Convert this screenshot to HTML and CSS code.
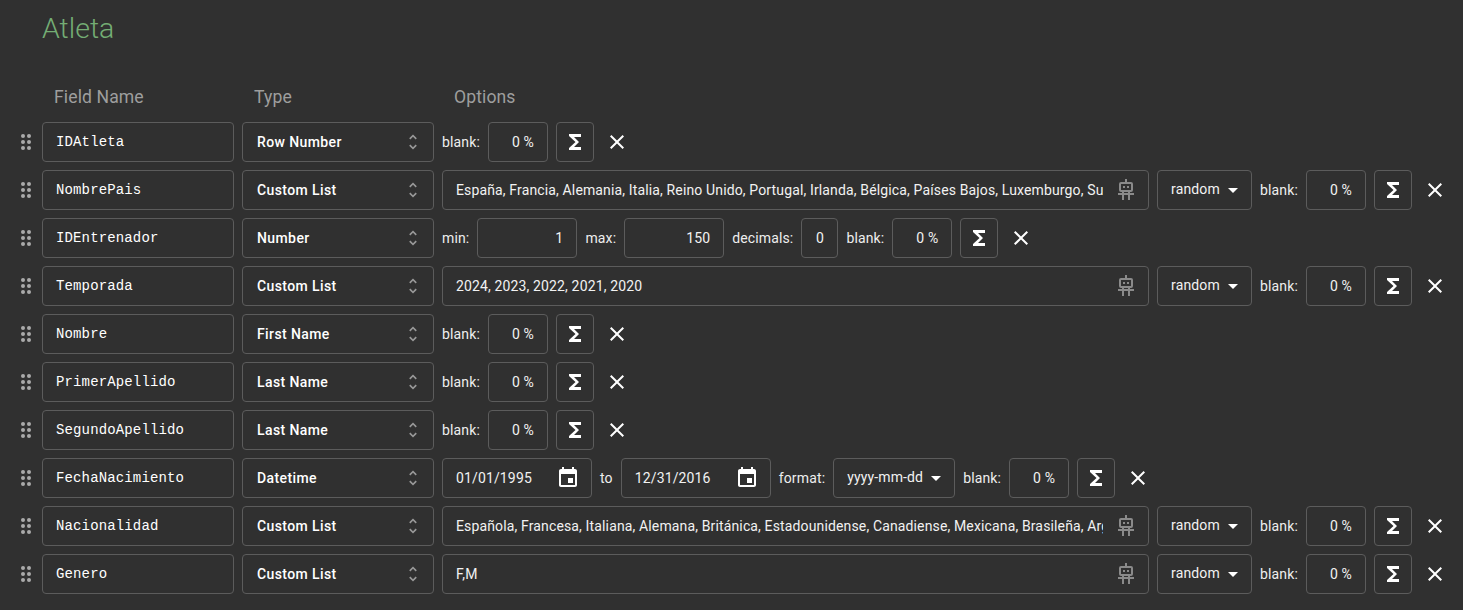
FILE: index.html
```html
<!DOCTYPE html>
<html lang="es">
<head>
<meta charset="utf-8">
<title>Atleta</title>
<link rel="stylesheet" href="styles.css">
</head>
<body>
<svg class="defs" width="0" height="0" aria-hidden="true">
  <symbol id="i-grip" viewBox="0 0 12 16"><circle cx="3" cy="2" r="2"/><circle cx="9" cy="2" r="2"/><circle cx="3" cy="8" r="2"/><circle cx="9" cy="8" r="2"/><circle cx="3" cy="14" r="2"/><circle cx="9" cy="14" r="2"/></symbol>
  <symbol id="i-unfold" viewBox="0 0 24 24"><path d="M12 5.83L15.17 9l1.41-1.41L12 3 7.41 7.59 8.83 9 12 5.83zm0 12.34L8.83 15l-1.42 1.41L12 21l4.59-4.59L15.17 15 12 18.17z"/></symbol>
  <symbol id="i-sigma" viewBox="0 0 24 24"><path d="M18 4H6v2l6.5 6L6 18v2h12v-3h-7l5-5-5-5h7z"/></symbol>
  <symbol id="i-close" viewBox="0 0 24 24"><path d="M19 6.41L17.59 5 12 10.59 6.41 5 5 6.41 10.59 12 5 17.59 6.41 19 12 13.41 17.59 19 19 17.59 13.41 12z"/></symbol>
  <symbol id="i-drop" viewBox="0 0 24 24"><path d="M7 10l5 5 5-5z"/></symbol>
  <symbol id="i-event" viewBox="0 0 24 24"><path d="M17 12h-5v5h5v-5zM16 1v2H8V1H6v2H5c-1.11 0-1.99.9-1.99 2L3 19c0 1.1.89 2 2 2h14c1.1 0 2-.9 2-2V5c0-1.1-.9-2-2-2h-1V1h-2zm3 18H5V8h14v11z"/></symbol>
  <symbol id="i-robot" viewBox="0 0 24 24"><path fill-rule="evenodd" d="M11 1h2v3h4a2 2 0 0 1 2 2v6a2 2 0 0 1-2 2h-1v1h4v2h-4v5h-2v-5h-4v5H8v-5H4v-2h4v-1H7a2 2 0 0 1-2-2V6a2 2 0 0 1 2-2h4zM7 6v6h10V6zM9 8h2v2H9zM13 8h2v2h-2zM10 14v1h4v-1z"/></symbol>
</svg>

<main class="page">
  <h1 class="title">Atleta</h1>
  <div class="head">
    <div class="head-cell">Field Name</div>
    <div class="head-cell">Type</div>
    <div class="head-cell">Options</div>
  </div>

  <div class="row">
    <svg class="grip"><use href="#i-grip"/></svg>
    <div class="box name">IDAtleta</div>
    <div class="box type">Row Number<svg class="unfold"><use href="#i-unfold"/></svg></div>
    <span class="lbl">blank:</span><div class="box num pct">0 %</div>
    <button class="box sum"><svg class="ic"><use href="#i-sigma"/></svg></button>
    <button class="close"><svg class="ic"><use href="#i-close"/></svg></button>
  </div>

  <div class="row">
    <svg class="grip"><use href="#i-grip"/></svg>
    <div class="box name">NombrePais</div>
    <div class="box type">Custom List<svg class="unfold"><use href="#i-unfold"/></svg></div>
    <div class="box list"><span class="list-text">España, Francia, Alemania, Italia, Reino Unido, Portugal, Irlanda, Bélgica, Países Bajos, Luxemburgo, Su</span><svg class="robot"><use href="#i-robot"/></svg></div>
    <div class="box sel order"><span class="sel-text">random</span><svg class="ic drop"><use href="#i-drop"/></svg></div>
    <span class="lbl">blank:</span><div class="box num pct">0 %</div>
    <button class="box sum"><svg class="ic"><use href="#i-sigma"/></svg></button>
    <button class="close"><svg class="ic"><use href="#i-close"/></svg></button>
  </div>

  <div class="row">
    <svg class="grip"><use href="#i-grip"/></svg>
    <div class="box name">IDEntrenador</div>
    <div class="box type">Number<svg class="unfold"><use href="#i-unfold"/></svg></div>
    <span class="lbl">min:</span><div class="box num wide">1</div>
    <span class="lbl">max:</span><div class="box num wide">150</div>
    <span class="lbl">decimals:</span><div class="box dec">0</div>
    <span class="lbl">blank:</span><div class="box num pct">0 %</div>
    <button class="box sum"><svg class="ic"><use href="#i-sigma"/></svg></button>
    <button class="close"><svg class="ic"><use href="#i-close"/></svg></button>
  </div>

  <div class="row">
    <svg class="grip"><use href="#i-grip"/></svg>
    <div class="box name">Temporada</div>
    <div class="box type">Custom List<svg class="unfold"><use href="#i-unfold"/></svg></div>
    <div class="box list"><span class="list-text">2024, 2023, 2022, 2021, 2020</span><svg class="robot"><use href="#i-robot"/></svg></div>
    <div class="box sel order"><span class="sel-text">random</span><svg class="ic drop"><use href="#i-drop"/></svg></div>
    <span class="lbl">blank:</span><div class="box num pct">0 %</div>
    <button class="box sum"><svg class="ic"><use href="#i-sigma"/></svg></button>
    <button class="close"><svg class="ic"><use href="#i-close"/></svg></button>
  </div>

  <div class="row">
    <svg class="grip"><use href="#i-grip"/></svg>
    <div class="box name">Nombre</div>
    <div class="box type">First Name<svg class="unfold"><use href="#i-unfold"/></svg></div>
    <span class="lbl">blank:</span><div class="box num pct">0 %</div>
    <button class="box sum"><svg class="ic"><use href="#i-sigma"/></svg></button>
    <button class="close"><svg class="ic"><use href="#i-close"/></svg></button>
  </div>

  <div class="row">
    <svg class="grip"><use href="#i-grip"/></svg>
    <div class="box name">PrimerApellido</div>
    <div class="box type">Last Name<svg class="unfold"><use href="#i-unfold"/></svg></div>
    <span class="lbl">blank:</span><div class="box num pct">0 %</div>
    <button class="box sum"><svg class="ic"><use href="#i-sigma"/></svg></button>
    <button class="close"><svg class="ic"><use href="#i-close"/></svg></button>
  </div>

  <div class="row">
    <svg class="grip"><use href="#i-grip"/></svg>
    <div class="box name">SegundoApellido</div>
    <div class="box type">Last Name<svg class="unfold"><use href="#i-unfold"/></svg></div>
    <span class="lbl">blank:</span><div class="box num pct">0 %</div>
    <button class="box sum"><svg class="ic"><use href="#i-sigma"/></svg></button>
    <button class="close"><svg class="ic"><use href="#i-close"/></svg></button>
  </div>

  <div class="row">
    <svg class="grip"><use href="#i-grip"/></svg>
    <div class="box name">FechaNacimiento</div>
    <div class="box type">Datetime<svg class="unfold"><use href="#i-unfold"/></svg></div>
    <div class="box date">01/01/1995<svg class="ic"><use href="#i-event"/></svg></div>
    <span class="lbl">to</span>
    <div class="box date">12/31/2016<svg class="ic"><use href="#i-event"/></svg></div>
    <span class="lbl">format:</span>
    <div class="box sel fmt"><span class="sel-text">yyyy-mm-dd</span><svg class="ic drop"><use href="#i-drop"/></svg></div>
    <span class="lbl">blank:</span><div class="box num pct">0 %</div>
    <button class="box sum"><svg class="ic"><use href="#i-sigma"/></svg></button>
    <button class="close"><svg class="ic"><use href="#i-close"/></svg></button>
  </div>

  <div class="row">
    <svg class="grip"><use href="#i-grip"/></svg>
    <div class="box name">Nacionalidad</div>
    <div class="box type">Custom List<svg class="unfold"><use href="#i-unfold"/></svg></div>
    <div class="box list"><span class="list-text">Española, Francesa, Italiana, Alemana, Británica, Estadounidense, Canadiense, Mexicana, Brasileña, Arg</span><svg class="robot"><use href="#i-robot"/></svg></div>
    <div class="box sel order"><span class="sel-text">random</span><svg class="ic drop"><use href="#i-drop"/></svg></div>
    <span class="lbl">blank:</span><div class="box num pct">0 %</div>
    <button class="box sum"><svg class="ic"><use href="#i-sigma"/></svg></button>
    <button class="close"><svg class="ic"><use href="#i-close"/></svg></button>
  </div>

  <div class="row">
    <svg class="grip"><use href="#i-grip"/></svg>
    <div class="box name">Genero</div>
    <div class="box type">Custom List<svg class="unfold"><use href="#i-unfold"/></svg></div>
    <div class="box list"><span class="list-text">F,M</span><svg class="robot"><use href="#i-robot"/></svg></div>
    <div class="box sel order"><span class="sel-text">random</span><svg class="ic drop"><use href="#i-drop"/></svg></div>
    <span class="lbl">blank:</span><div class="box num pct">0 %</div>
    <button class="box sum"><svg class="ic"><use href="#i-sigma"/></svg></button>
    <button class="close"><svg class="ic"><use href="#i-close"/></svg></button>
  </div>
</main>
</body>
</html>
```
FILE: styles.css
```css
* { box-sizing: border-box; }
html, body { margin: 0; height: 100%; overflow: hidden; }
body {
  background: #303030;
  color: #fff;
  font-family: Roboto, "Liberation Sans", sans-serif;
  font-size: 14px;
  letter-spacing: 0.14px;
}
.defs { position: absolute; }
.page { padding: 0 13px 0 20px; }
.title {
  margin: 0 0 0 22px;
  height: 56px;
  line-height: 58px;
  font-size: 28.5px;
  font-weight: 300;
  letter-spacing: 0;
  color: #74ad74;
}
.head {
  display: flex;
  height: 66px;
  padding: 16px 0 0 22px;
  align-items: center;
}
.head-cell {
  width: 200px;
  padding-left: 12px;
  font-size: 17.6px;
  letter-spacing: 0.1px;
  color: #9e9e9e;
}
.row {
  display: flex;
  align-items: center;
  gap: 8px;
  height: 40px;
  margin-bottom: 8px;
}
.grip { width: 12px; height: 16px; margin-right: 2px; fill: #aaa; flex: none; }
.box {
  display: flex;
  align-items: center;
  flex: none;
  height: 40px;
  border: 1px solid #5c5c5c;
  border-radius: 4px;
  background: transparent;
  color: #fff;
  font: inherit;
  letter-spacing: inherit;
}
.name {
  width: 192px;
  padding: 0 13px;
  font-family: "Liberation Mono", monospace;
  font-size: 14px;
}
.type {
  width: 192px;
  padding: 0 14px;
  justify-content: space-between;
  font-weight: 500;
  letter-spacing: 0.4px;
}
.unfold { width: 20px; height: 20px; margin-right: -4px; fill: #999; }
.lbl { flex: none; color: #eee; }
.num { justify-content: flex-end; padding-right: 13px; color: #f2f2f2; }
.pct { width: 60px; }
.wide { width: 100px; }
.dec { width: 37px; justify-content: center; color: #f2f2f2; }
.sum { width: 38px; justify-content: center; padding: 0; cursor: pointer; }
.close {
  width: 30px;
  height: 40px;
  display: flex;
  align-items: center;
  justify-content: center;
  padding: 0;
  border: 0;
  background: none;
  cursor: pointer;
}
.ic { width: 24px; height: 24px; fill: #fff; flex: none; }
.list {
  flex: 1;
  min-width: 0;
  padding: 0 10px 0 13px;
  gap: 11px;
  color: #f2f2f2;
}
.list-text { flex: 1; min-width: 0; overflow: hidden; white-space: nowrap; }
.robot { width: 24px; height: 24px; fill: #8a8a8a; flex: none; }
.sel { padding: 0 6px 0 13px; justify-content: space-between; color: #f2f2f2; }
.sel-text { padding-bottom: 2px; }
.order { width: 95px; }
.fmt { width: 122px; }
.date { width: 150px; padding: 0 11px 0 13px; justify-content: space-between; color: #f2f2f2; }
```
